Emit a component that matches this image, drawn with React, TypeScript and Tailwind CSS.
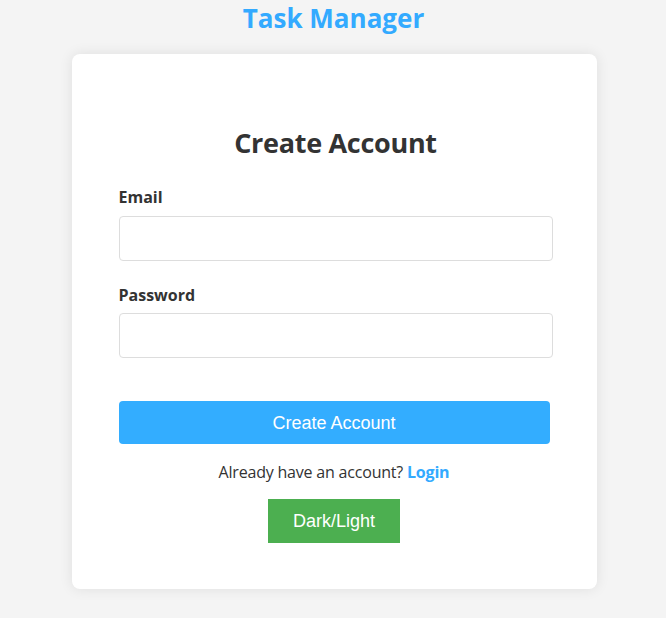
export default function App() {
    return (
        <div className="min-h-[618px] w-full bg-[#f4f4f4] flex flex-col items-center" style={{ fontFamily: '"Open Sans", "Noto Sans", sans-serif' }}>
            {/* Page title */}
            <h1 className="mt-[2px] ml-px text-[26px] leading-[32px] font-bold text-[#33aaff] tracking-[0px]">
                Task Manager
            </h1>

            {/* Card */}
            <div className="mt-[20px] ml-[2px] w-[525px] h-[535px] bg-white rounded-lg shadow-[0_0_14px_rgba(0,0,0,0.09)] pt-[72px] pl-[47px] pr-[44px] flex flex-col">
                <h2 className="text-center text-[27px] leading-[34px] font-bold text-[#333] tracking-[-0.3px]">
                    Create Account
                </h2>

                <label className="mt-[25px] text-[16px] leading-[24px] font-bold text-[#333]">Email</label>
                <input type="email" className="mt-[7px] w-[434px] h-[45px] border border-[#ddd] rounded bg-white" />

                <label className="mt-[22px] text-[16px] leading-[24px] font-bold text-[#333]">Password</label>
                <input type="password" className="mt-[6px] w-[434px] h-[45px] border border-[#ddd] rounded bg-white" />

                <button
                    className="mt-[43px] w-[431px] h-[43px] rounded bg-[#33adff] text-white text-[18px] pt-px"
                    style={{ fontFamily: '"Liberation Sans", Arial, sans-serif' }}
                >
                    Create Account
                </button>

                <p className="mt-[16px] w-[431px] text-center text-[16px] leading-[24px] text-[#333] tracking-[-0.2px]">
                    Already have an account? <span className="font-bold text-[#33aaff]">Login</span>
                </p>

                <div className="w-[431px] flex justify-center mt-[15px]">
                    <button
                        className="w-[132px] h-[44px] bg-[#4caf50] text-white text-[18px]"
                        style={{ fontFamily: '"Liberation Sans", Arial, sans-serif' }}
                    >
                        Dark/Light
                    </button>
                </div>
            </div>
        </div>
    );
}
